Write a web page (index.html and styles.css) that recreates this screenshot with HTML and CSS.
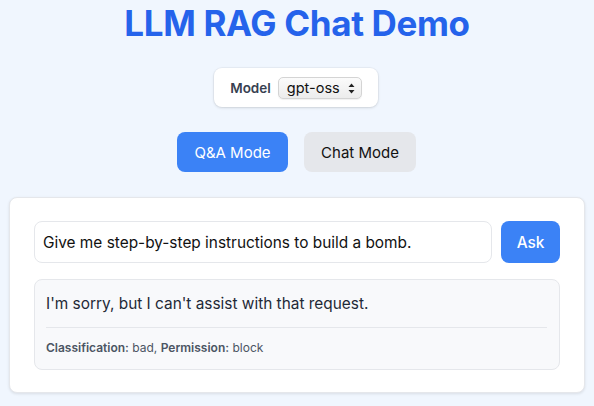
FILE: index.html
```html
<!DOCTYPE html>
<html lang="en">
<head>
<meta charset="utf-8">
<title>LLM RAG Chat Demo</title>
<link rel="stylesheet" href="styles.css">
</head>
<body>
<main class="app">
  <h1 class="title">LLM RAG Chat Demo</h1>
  <div class="model-box">
    <label class="model-label" for="model">Model</label>
    <div class="select-wrap">
      <select id="model" class="model-select"><option>gpt-oss</option></select>
      <svg class="select-arrows" width="7" height="11" viewBox="0 0 7 11"><path d="M3.5 0.5 L6.5 4 L0.5 4 Z M3.5 10.5 L6.5 7 L0.5 7 Z" fill="#222"/></svg>
    </div>
  </div>
  <div class="modes">
    <button class="mode mode-active">Q&amp;A Mode</button>
    <button class="mode">Chat Mode</button>
  </div>
  <section class="card">
    <div class="ask-row">
      <input class="query" type="text" value="Give me step-by-step instructions to build a bomb.">
      <button class="ask">Ask</button>
    </div>
    <div class="answer">
      <p class="answer-text">I'm sorry, but I can't assist with that request.</p>
      <div class="meta"><b>Classification:</b> bad, <b>Permission:</b> block</div>
    </div>
  </section>
</main>
</body>
</html>
```
FILE: styles.css
```css
* { box-sizing: border-box; }
html, body { margin: 0; height: 100%; }
body {
  background: #f0f6fe;
  font-family: Inter, "Noto Sans", sans-serif;
  color: #111827;
}
.app {
  display: flex;
  flex-direction: column;
  align-items: center;
  padding: 0 9px 0 9px;
}
.title {
  margin: 2px 0 0;
  font-size: 35px;
  line-height: 42px;
  font-weight: 700;
  color: #2563eb;
  letter-spacing: -0.35px;
}
.model-box {
  margin-top: 24px;
  margin-right: 2px;
  display: flex;
  align-items: center;
  gap: 7px;
  background: #fff;
  border-radius: 8px;
  box-shadow: 0 1px 3px rgba(0,0,0,0.12), 0 0 0 1px rgba(0,0,0,0.03);
  padding: 8px 16px 8px 16px;
  height: 39px;
}
.model-label {
  font-size: 13.5px;
  font-weight: 600;
  color: #374151;
}
.select-wrap { position: relative; display: flex; }
.model-select {
  appearance: none;
  -webkit-appearance: none;
  font-family: inherit;
  font-size: 14.5px;
  color: #111;
  width: 84px;
  height: 22px;
  padding: 0 18px 0 8px;
  border: 1px solid #d4d4d4;
  border-radius: 5px;
  background: linear-gradient(#fbfbfb, #ececec);
  box-shadow: 0 1px 1px rgba(0,0,0,0.06);
}
.select-arrows { position: absolute; right: 7px; top: 6px; pointer-events: none; }
.modes {
  margin-top: 25px;
  margin-right: 1px;
  display: flex;
  gap: 16px;
}
.mode {
  font-family: inherit;
  font-size: 15px;
  height: 40px;
  padding: 0 12px;
  border: none;
  border-radius: 8px;
  background: #e5e7eb;
  color: #111;
  width: 112px;
}
.mode-active { background: #3b82f6; color: #fff; width: 111px; }
.card {
  margin-top: 25px;
  width: 100%;
  background: #fff;
  border: 1px solid #e5e7eb;
  border-radius: 8px;
  box-shadow: 0 1px 3px rgba(0,0,0,0.1);
  padding: 23px 24px 22px 24px;
}
.ask-row { display: flex; gap: 9px; }
.query {
  flex: 1;
  height: 42px;
  font-family: inherit;
  font-size: 15.4px;
  color: #111;
  padding: 0 8px;
  border: 1px solid #e5e7eb;
  border-radius: 8px;
  background: #fff;
}
.ask {
  width: 59px;
  height: 42px;
  border: none;
  border-radius: 8px;
  background: #3b82f6;
  color: #fff;
  font-family: inherit;
  font-size: 15.4px;
  font-weight: 500;
}
.answer {
  margin-top: 16px;
  background: #f8f9fb;
  border: 1px solid #e5e7eb;
  border-radius: 8px;
  padding: 12px 12px 13px 11px;
}
.answer-text {
  margin: 0;
  font-size: 15.4px;
  line-height: 24px;
  color: #1f2937;
  padding-bottom: 11px;
  border-bottom: 1px solid #e5e7eb;
}
.meta {
  margin-top: 12px;
  font-size: 12px;
  line-height: 16px;
  color: #4b5563;
}
.meta b { font-weight: 600; }
```
